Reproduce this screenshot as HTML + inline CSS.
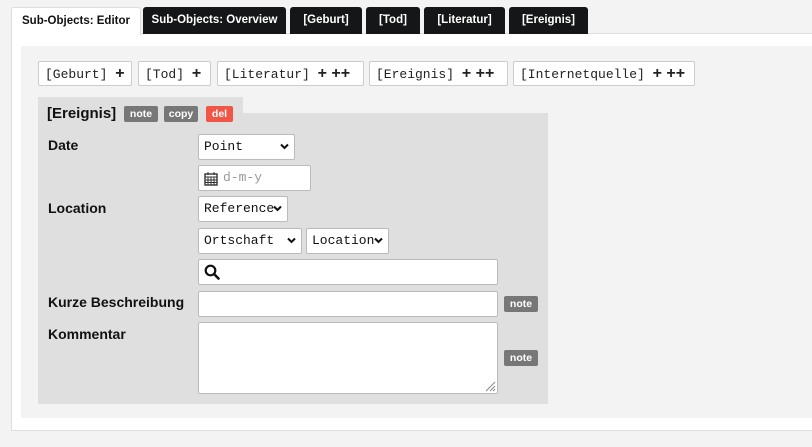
<!DOCTYPE html>
<html><head><style>
*{box-sizing:border-box}
body{margin:0;width:812px;height:447px;background:#f3f3f3;font-family:"Liberation Sans",sans-serif;position:relative;overflow:hidden}
.tab{position:absolute;top:7px;height:27px;background:#141617;color:#fff;font-size:11.5px;font-weight:bold;line-height:27px;text-align:center;border-radius:3px 3px 0 0}
.tab.a{background:#fff;color:#111;border:1px solid #ddd;border-bottom:none;height:28px;z-index:2}
.panel{position:absolute;left:11px;top:33px;width:810px;height:398px;background:#fff;border:1px solid #ddd}
.inner{position:absolute;left:21px;top:46px;width:800px;height:372px;background:#f3f3f3}
.btn{position:absolute;top:61px;height:25px;background:#fff;border:1px solid #ccc;border-radius:2px;font-family:"Liberation Mono",monospace;font-size:13px;line-height:23px;padding-left:6px;color:#222}
.btn b{font-family:"Liberation Sans",sans-serif;font-size:16px}
.box{position:absolute;left:38px;top:113px;width:510px;height:291px;background:#dfdfdf}
.hdr{position:absolute;left:38px;top:97px;width:205px;height:17px;background:#dfdfdf}
.t{position:absolute;font-size:15px;font-weight:bold;color:#111}
.lab{position:absolute;left:48px;font-size:14px;font-weight:bold;color:#111}
.badge{position:absolute;height:16px;font-size:10.5px;font-weight:bold;color:#fff;line-height:16px;text-align:center;border-radius:2px;background:#777}
.in{position:absolute;background:#fff;border:1px solid #bbb;border-radius:2px;font-family:"Liberation Mono",monospace;font-size:13px;line-height:23px;padding-left:5px;color:#111}
.in i{position:absolute;right:5px;top:8px;width:9px;height:7px;line-height:0}
.in i svg{display:block}
</style></head><body>
<div class="panel"></div>
<div class="inner"></div>
<div class="tab a" style="left:11px;width:130px">Sub-Objects: Editor</div>
<div class="tab" style="left:143px;width:143px">Sub-Objects: Overview</div>
<div class="tab" style="left:290px;width:72px">[Geburt]</div>
<div class="tab" style="left:366px;width:54px">[Tod]</div>
<div class="tab" style="left:424px;width:81px">[Literatur]</div>
<div class="tab" style="left:509px;width:79px">[Ereignis]</div>

<div class="btn" style="left:38px;width:94px">[Geburt] <b>+</b></div>
<div class="btn" style="left:138px;width:73px">[Tod] <b>+</b></div>
<div class="btn" style="left:217px;width:147px">[Literatur] <b>+ ++</b></div>
<div class="btn" style="left:369px;width:139px">[Ereignis] <b>+ ++</b></div>
<div class="btn" style="left:513px;width:182px">[Internetquelle] <b>+ ++</b></div>

<div class="hdr"></div>
<div class="box"></div>
<div class="t" style="left:47px;top:105px">[Ereignis]</div>
<div class="badge" style="left:124px;top:106px;width:34px">note</div>
<div class="badge" style="left:164px;top:106px;width:34px">copy</div>
<div class="badge" style="left:206px;top:106px;width:27px;background:#f05545">del</div>

<div class="lab" style="top:137px">Date</div>
<div class="lab" style="top:200px">Location</div>
<div class="lab" style="top:294px">Kurze Beschreibung</div>
<div class="lab" style="top:326px">Kommentar</div>

<div class="in" style="left:198px;top:134px;width:97px;height:26px">Point<i><svg width="9" height="7"><path d="M1 1.5L4.5 5L8 1.5" fill="none" stroke="#111" stroke-width="2"/></svg></i></div>
<div class="in" style="left:198px;top:165px;width:113px;height:26px;color:#999;padding-left:24px"><svg style="position:absolute;left:5px;top:5px" width="14" height="15" viewBox="0 0 14 15"><rect x="1" y="3" width="12" height="11" fill="none" stroke="#333" stroke-width="1.4"/><path d="M1 6H13M4 1V4M10 1V4M1 9H13M1 11.5H13M4 6V14M7 6V14M10 6V14" stroke="#333" stroke-width="1"/></svg>d-m-y</div>
<div class="in" style="left:198px;top:196px;width:90px;height:26px">Reference<i><svg width="9" height="7"><path d="M1 1.5L4.5 5L8 1.5" fill="none" stroke="#111" stroke-width="2"/></svg></i></div>
<div class="in" style="left:198px;top:228px;width:104px;height:26px">Ortschaft<i><svg width="9" height="7"><path d="M1 1.5L4.5 5L8 1.5" fill="none" stroke="#111" stroke-width="2"/></svg></i></div>
<div class="in" style="left:306px;top:228px;width:83px;height:26px">Location<i><svg width="9" height="7"><path d="M1 1.5L4.5 5L8 1.5" fill="none" stroke="#111" stroke-width="2"/></svg></i></div>
<div class="in" style="left:198px;top:259px;width:300px;height:26px"><svg style="position:absolute;left:5px;top:4px" width="16" height="16" viewBox="0 0 16 16"><circle cx="6.5" cy="6.5" r="4.8" fill="none" stroke="#111" stroke-width="2.2"/><path d="M10 10L14.5 14.5" stroke="#111" stroke-width="2.6" stroke-linecap="round"/></svg></div>
<div class="in" style="left:198px;top:291px;width:300px;height:26px"></div>
<div class="in" style="left:198px;top:322px;width:300px;height:72px"><svg style="position:absolute;right:1px;bottom:1px" width="12" height="12"><path d="M11 2L2 11M11 6L6 11M11 9L9 11" stroke="#888"/></svg></div>
<div class="badge" style="left:504px;top:296px;width:34px">note</div>
<div class="badge" style="left:504px;top:350px;width:34px">note</div>
</body></html>
